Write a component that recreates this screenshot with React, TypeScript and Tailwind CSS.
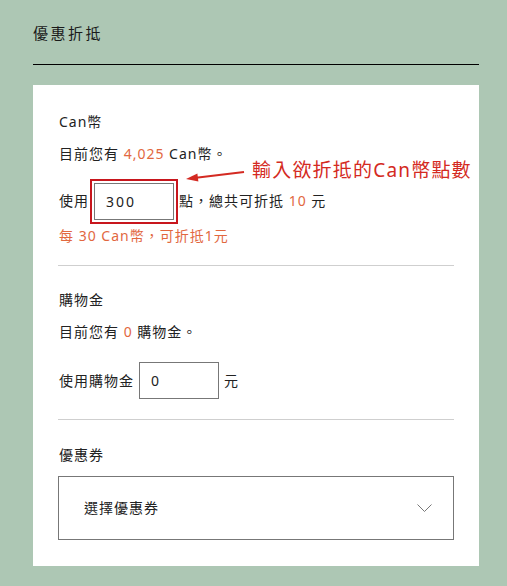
const font = "font-['Noto_Sans','Noto_Sans_CJK_TC',sans-serif]";

const Hint = () => (
  <>
    <svg className="absolute left-[184px] top-[166px]" width="62" height="18" viewBox="0 0 62 18">
      <line x1="60" y1="6" x2="10" y2="12" stroke="#d42a22" strokeWidth="2" />
      <polygon points="2,13 14.4,15.6 13.4,7.4" fill="#d42a22" />
    </svg>
    <div className="absolute left-[252px] top-[157px] text-[19px] leading-[26px] tracking-[1.2px] text-[#d42a22] whitespace-nowrap">
      輸入欲折抵的Can幣點數
    </div>
  </>
);

const App = () => {
  return (
    <div className={`relative w-[507px] h-[586px] bg-[#adc7b4] pl-[33px] pr-[28px] pt-[22px] ${font} text-[#222] overflow-hidden`}>
      <div className="pb-[20px] border-b border-black">
        <h2 className="text-[15px] leading-[22px] tracking-[2.5px] text-[#1a1a1a]">優惠折抵</h2>
      </div>

      <div className="mt-[20px] bg-white px-[25px] pt-[26px] pb-[26px] text-[14px] leading-[22px] tracking-[1px]">
        {/* Can幣 */}
        <div className="pl-[1px]">Can幣</div>
        <div className="mt-[10px] pl-[1px]">
          目前您有 <span className="text-[#e2683f]">4,025</span> Can幣。
        </div>
        <div className="mt-[13px] pl-[1px] flex items-center h-[46px]">
          <span>使用</span>
          <input
            defaultValue="300"
            className="mx-[5px] w-[80px] h-[37px] border border-[#777] px-[11px] text-[14px] tracking-[2px] text-[#222] outline-2 outline-offset-2 outline-[#c8161d] outline-solid"
          />
          <span>
            點，總共可折抵 <span className="text-[#e2683f]">10</span> 元
          </span>
        </div>
        <div className="mt-[1px] pl-[1px] text-[#e2683f]">每 30 Can幣，可折抵1元</div>
        <div className="mt-[18px] border-t border-[#cfcfcf]" />

        {/* 購物金 */}
        <div className="mt-[23px] pl-[1px]">購物金</div>
        <div className="mt-[10px] pl-[1px]">
          目前您有 <span className="text-[#e2683f]">0</span> 購物金。
        </div>
        <div className="mt-[19px] pl-[1px] flex items-center">
          <span>使用購物金</span>
          <input
            defaultValue="0"
            className="mx-[5px] w-[80px] h-[37px] border border-[#777] px-[11px] text-[14px] tracking-[2px] text-[#222] outline-none"
          />
          <span>元</span>
        </div>
        <div className="mt-[20px] border-t border-[#cfcfcf]" />

        {/* 優惠券 */}
        <div className="mt-[24px] pl-[1px]">優惠券</div>
        <div className="mt-[10px] h-[64px] border border-[#777] flex items-center justify-between pl-[25px] pr-[21px]">
          <span>選擇優惠券</span>
          <svg width="15" height="8" viewBox="0 0 15 8" fill="none">
            <path d="M0.5 0.5 L7.5 7.5 L14.5 0.5" stroke="#777" strokeWidth="1" />
          </svg>
        </div>
      </div>

      <Hint />
    </div>
  );
};

export default App;
